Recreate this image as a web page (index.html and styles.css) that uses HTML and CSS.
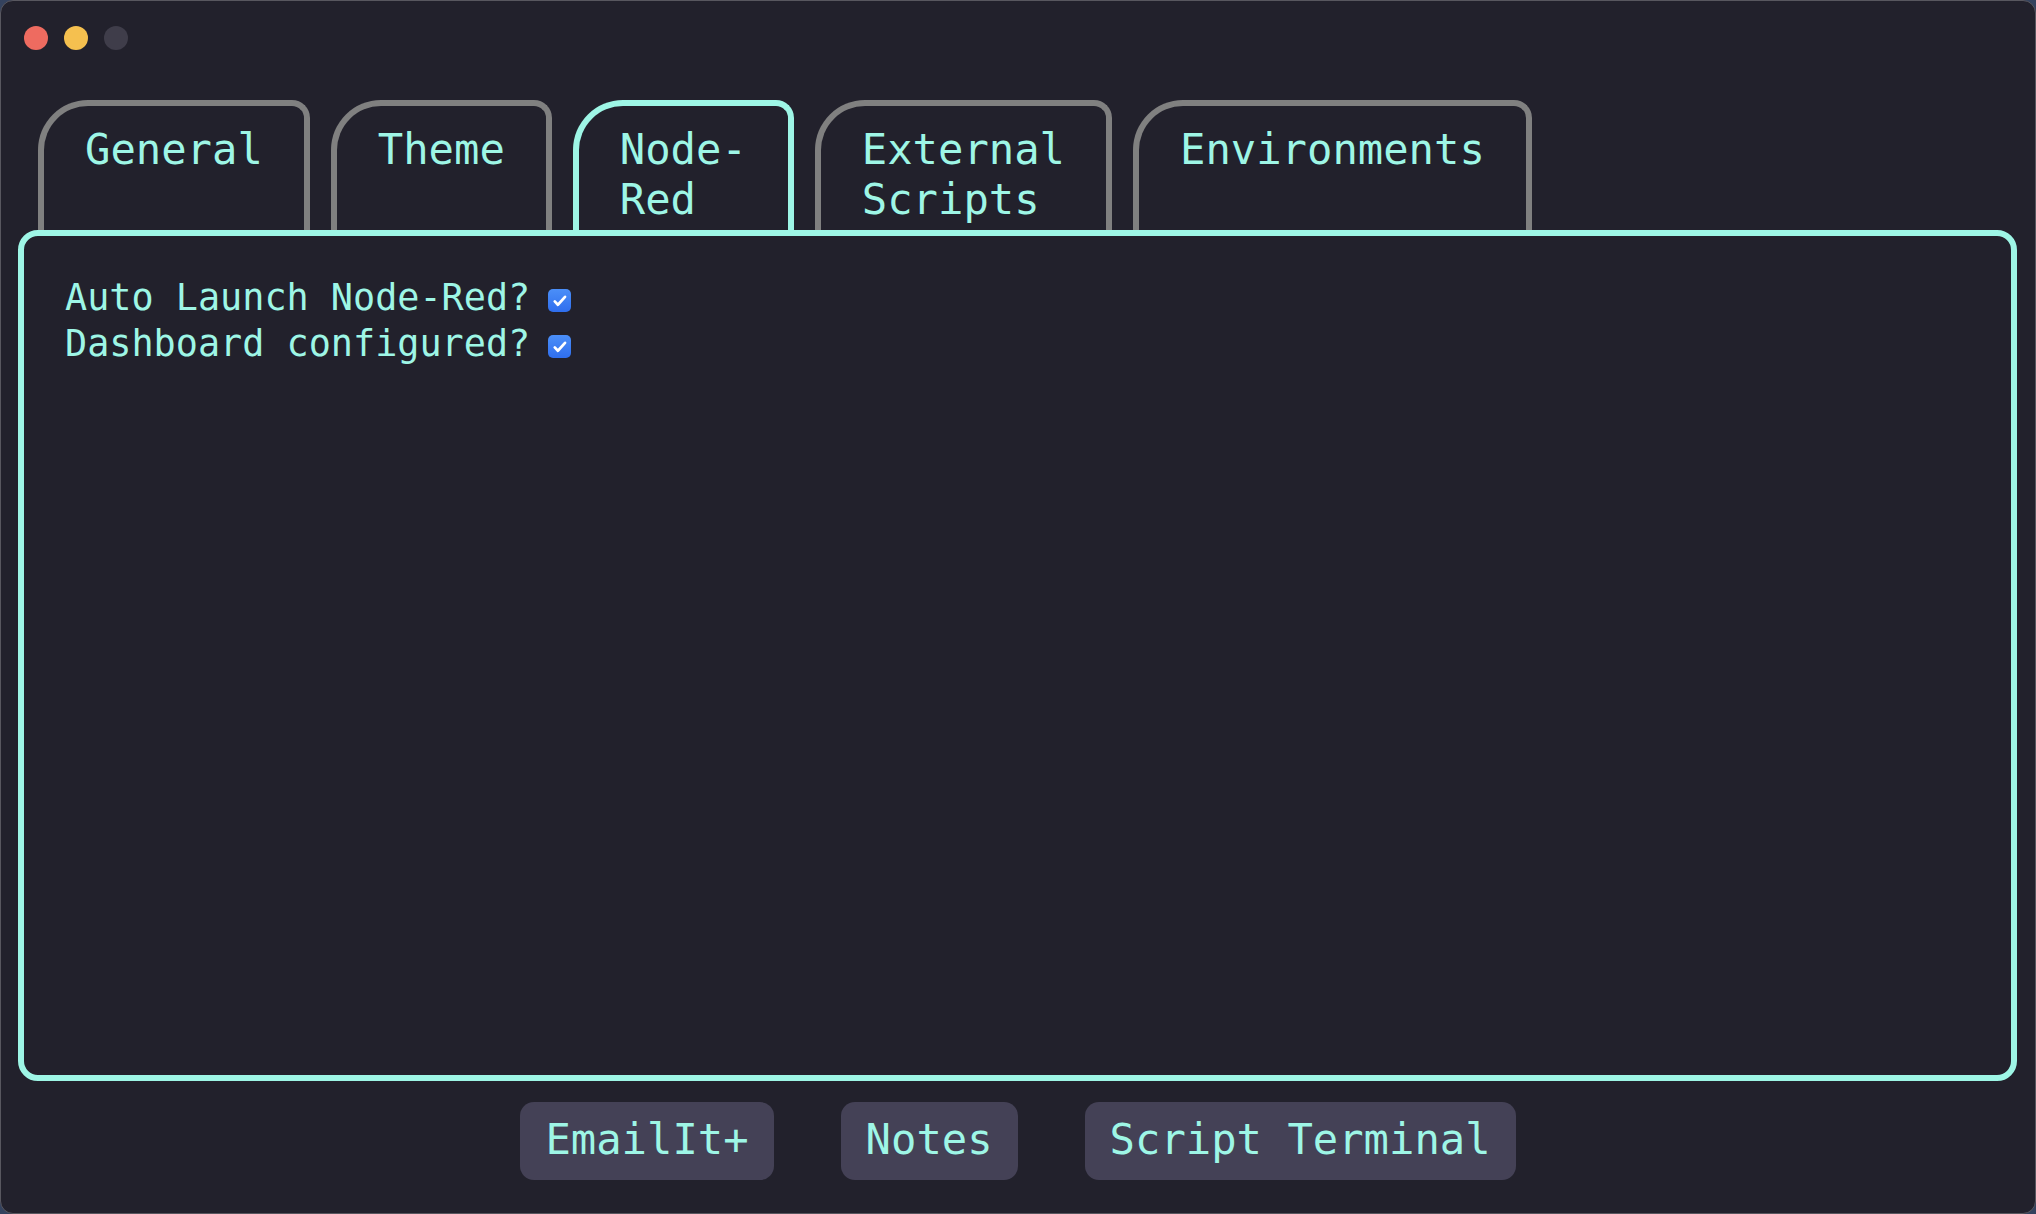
FILE: index.html
```html
<!DOCTYPE html>
<html lang="en">
<head>
<meta charset="utf-8">
<title>Settings</title>
<link rel="stylesheet" href="styles.css">
</head>
<body>
<div class="window">
  <div class="titlebar">
    <span class="light light-close"></span>
    <span class="light light-min"></span>
    <span class="light light-max"></span>
  </div>
  <div class="tabs">
    <div class="tab">General</div>
    <div class="tab">Theme</div>
    <div class="tab tab-active">Node-<br>Red</div>
    <div class="tab">External<br>Scripts</div>
    <div class="tab">Environments</div>
  </div>
  <div class="panel">
    <div class="row">
      <span class="label">Auto Launch Node-Red?</span>
      <span class="checkbox"><svg viewBox="0 0 24 24" width="18" height="18"><path d="M5 12.5l4.2 4.5 9.5-10.5" fill="none" stroke="#ffffff" stroke-width="3.6" stroke-linecap="round" stroke-linejoin="round"/></svg></span>
    </div>
    <div class="row">
      <span class="label">Dashboard configured?</span>
      <span class="checkbox"><svg viewBox="0 0 24 24" width="18" height="18"><path d="M5 12.5l4.2 4.5 9.5-10.5" fill="none" stroke="#ffffff" stroke-width="3.6" stroke-linecap="round" stroke-linejoin="round"/></svg></span>
    </div>
  </div>
  <div class="actions">
    <button class="action">EmailIt+</button>
    <button class="action">Notes</button>
    <button class="action">Script Terminal</button>
  </div>
</div>
</body>
</html>
```

FILE: styles.css
```css
html, body {
  margin: 0;
  padding: 0;
  background: #34425e;
  height: 100%;
}

body {
  font-family: "DejaVu Sans Mono", "Liberation Mono", monospace;
  color: #9ef6e6;
}

.window {
  box-sizing: border-box;
  width: 2036px;
  height: 1214px;
  background: #22212c;
  border: 1px solid #58575f;
  border-radius: 13px;
  display: flex;
  flex-direction: column;
  overflow: hidden;
}

.titlebar {
  box-sizing: border-box;
  height: 99px;
  padding: 25px 0 0 23px;
  display: flex;
  gap: 16px;
  flex: none;
}

.light {
  width: 24px;
  height: 24px;
  border-radius: 50%;
  display: block;
}

.light-close { background: #ee6b60; }
.light-min { background: #f5c04f; }
.light-max { background: #3f3d4a; }

.tabs {
  display: flex;
  gap: 21px;
  margin: 0 18px 0 17px;
  padding-left: 20px;
  flex: none;
}

.tab {
  border: 6px solid #808080;
  border-bottom: 0;
  border-radius: 50px 18px 0 0;
  padding: 19px 41px 5px;
  font-size: 42.2px;
  line-height: 50px;
  white-space: nowrap;
}

.tab-active {
  border-color: #9ef6e6;
}

.panel {
  flex: 1;
  min-height: 0;
  margin: 0 18px 0 17px;
  border: 6px solid #9ef6e6;
  border-radius: 20px;
  padding: 39px 41px 37px;
}

.row {
  display: flex;
  align-items: center;
  font-size: 36.8px;
  line-height: 46px;
  white-space: pre;
}

.checkbox {
  width: 23px;
  height: 23px;
  margin-left: 18px;
  margin-top: 5px;
  border-radius: 5px;
  background: linear-gradient(#4b8ff8, #2f6eee);
  display: flex;
  align-items: center;
  justify-content: center;
}

.checkbox svg {
  display: block;
}

.actions {
  flex: none;
  display: flex;
  justify-content: center;
  gap: 67px;
  padding: 21px 0 33px;
}

.action {
  font-family: "DejaVu Sans Mono", "Liberation Mono", monospace;
  font-size: 42.2px;
  line-height: 50px;
  color: #9ef6e6;
  background: #444156;
  border: 0;
  border-radius: 14px;
  padding: 13px 25px 15px;
  margin: 0;
}
```
